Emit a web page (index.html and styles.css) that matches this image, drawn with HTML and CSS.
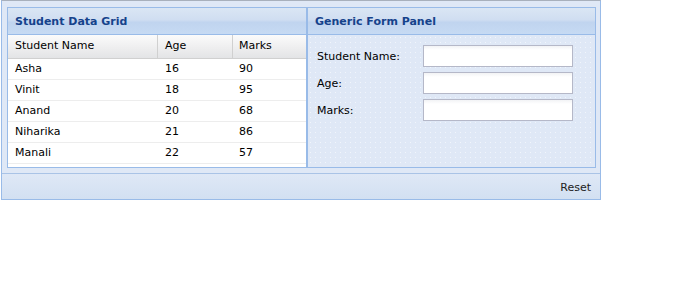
FILE: index.html
```html
<!DOCTYPE html>
<html>
<head>
<meta charset="utf-8">
<link rel="stylesheet" href="styles.css">
</head>
<body>
<div class="outer">
  <div class="outer-body">
    <div class="panel grid-panel">
      <div class="panel-header">Student Data Grid</div>
      <div class="grid">
        <div class="grid-head">
          <div class="c c1">Student Name</div>
          <div class="c c2">Age</div>
          <div class="c c3">Marks</div>
        </div>
        <div class="row"><div class="c c1">Asha</div><div class="c c2">16</div><div class="c c3">90</div></div>
        <div class="row"><div class="c c1">Vinit</div><div class="c c2">18</div><div class="c c3">95</div></div>
        <div class="row"><div class="c c1">Anand</div><div class="c c2">20</div><div class="c c3">68</div></div>
        <div class="row"><div class="c c1">Niharika</div><div class="c c2">21</div><div class="c c3">86</div></div>
        <div class="row"><div class="c c1">Manali</div><div class="c c2">22</div><div class="c c3">57</div></div>
      </div>
    </div>
    <div class="panel form-panel">
      <div class="panel-header">Generic Form Panel</div>
      <div class="form-body">
        <div class="field"><label>Student Name:</label><input type="text"></div>
        <div class="field"><label>Age:</label><input type="text"></div>
        <div class="field"><label>Marks:</label><input type="text"></div>
      </div>
    </div>
  </div>
  <div class="toolbar"><span class="btn">Reset</span></div>
</div>
</body>
</html>
```

FILE: styles.css
```css
html, body { margin: 0; padding: 0; background: #fff; }
body {
  font-family: "DejaVu Sans", "Liberation Sans", sans-serif;
  font-size: 11px;
  color: #000;
}
.outer {
  margin-left: 1px;
  width: 600px;
  height: 200px;
  box-sizing: border-box;
  border: 1px solid #99bbe8;
  border-top: 1px solid #a8b0bc;
  background: #dfe8f6;
  display: flex;
  flex-direction: column;
}
.outer-body {
  display: flex;
  padding: 6px 4px 5px 5px;
  height: 172px;
  box-sizing: border-box;
}
.panel {
  border: 1px solid #99bbe8;
  box-sizing: border-box;
  height: 161px;
  display: flex;
  flex-direction: column;
}
.grid-panel { width: 300px; background: #fff; }
.form-panel { width: 289px; background: #dfe8f6; }
.panel-header {
  height: 27px;
  box-sizing: border-box;
  border-bottom: 1px solid #99bbe8;
  background: linear-gradient(#dae6f4 0%, #d0def1 45%, #c0d4ef 55%, #c6daf3 100%);
  color: #15428b;
  font-weight: bold;
  font-size: 11px;
  padding: 7px 0 0 7px;
}
.grid { flex: 1; background: #fff; }
.grid-head {
  display: flex;
  height: 24px;
  box-sizing: border-box;
  background: linear-gradient(#fbfbfb, #ededee 60%, #e3e4e6);
  border-bottom: 1px solid #d0d0d0;
}
.grid-head .c {
  line-height: 21px;
  border-right: 1px solid #d0d0d0;
  color: #000;
}
.grid-head .c3 { border-right: 0; }
.row {
  display: flex;
  height: 21px;
  box-sizing: border-box;
  border-bottom: 1px solid #ededed;
}
.row .c { line-height: 20px; }
.c {
  box-sizing: border-box;
  padding-left: 7px;
  white-space: nowrap;
  overflow: hidden;
}
.c1 { width: 150px; }
.c2 { width: 75px; }
.c3 { flex: 1; padding-left: 6px; }
.form-body {
  flex: 1;
  padding: 10px 0 0 9px;
  background-color: #dfe8f6;
  background-image: radial-gradient(rgba(255,255,255,0.55) 0.6px, transparent 0.9px);
  background-size: 5px 5px;
}
.field {
  display: flex;
  align-items: center;
  height: 22px;
  margin-bottom: 5px;
}
.field label {
  width: 106px;
  color: #000;
}
.field input {
  width: 150px;
  height: 22px;
  box-sizing: border-box;
  margin: 0;
  border: 1px solid #b5b8c8;
  background: linear-gradient(#f2f3f5, #fff 4px);
  padding: 0 3px;
}
.toolbar {
  flex: 1;
  border-top: 1px solid #a9c3e6;
  background: linear-gradient(#dfe8f6, #d2e0f2);
  display: flex;
  justify-content: flex-end;
  align-items: center;
}
.btn {
  color: #222;
  margin-right: 9px;
  margin-top: 1px;
}
```
